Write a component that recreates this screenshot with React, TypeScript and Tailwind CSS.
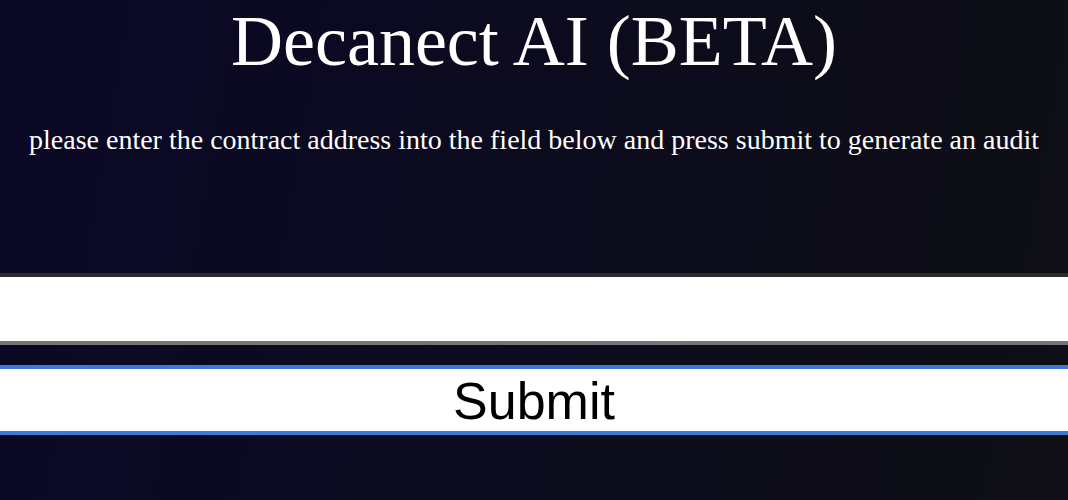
export default function App() {
  return (
    <div className="min-h-[500px] w-full overflow-hidden bg-[linear-gradient(100deg,#0b0826_0%,#0c0b1e_50%,#0e0e14_100%)] text-white">
      <h1 className="m-0 text-center text-[72px] font-normal leading-[1.15] font-['Liberation_Serif','Times_New_Roman',serif]">
        Decanect AI (BETA)
      </h1>
      <p className="mt-[41px] text-center text-[28px] leading-[1.15] font-['Liberation_Serif','Times_New_Roman',serif]">
        please enter the contract address into the field below and press submit to generate an audit
      </p>
      <div className="mt-[117px] flex flex-col">
        <input
          type="text"
          className="block h-[72px] w-full border-y-4 border-t-[#2b2b2b] border-b-[#767676] bg-white outline-none"
        />
        <button className="mt-[20px] block h-[70px] w-full border-y-4 border-[#3b78d8] bg-white pt-[2px] text-[52px] leading-none text-black font-['Liberation_Sans',Arial,sans-serif]">
          Submit
        </button>
      </div>
    </div>
  );
}
